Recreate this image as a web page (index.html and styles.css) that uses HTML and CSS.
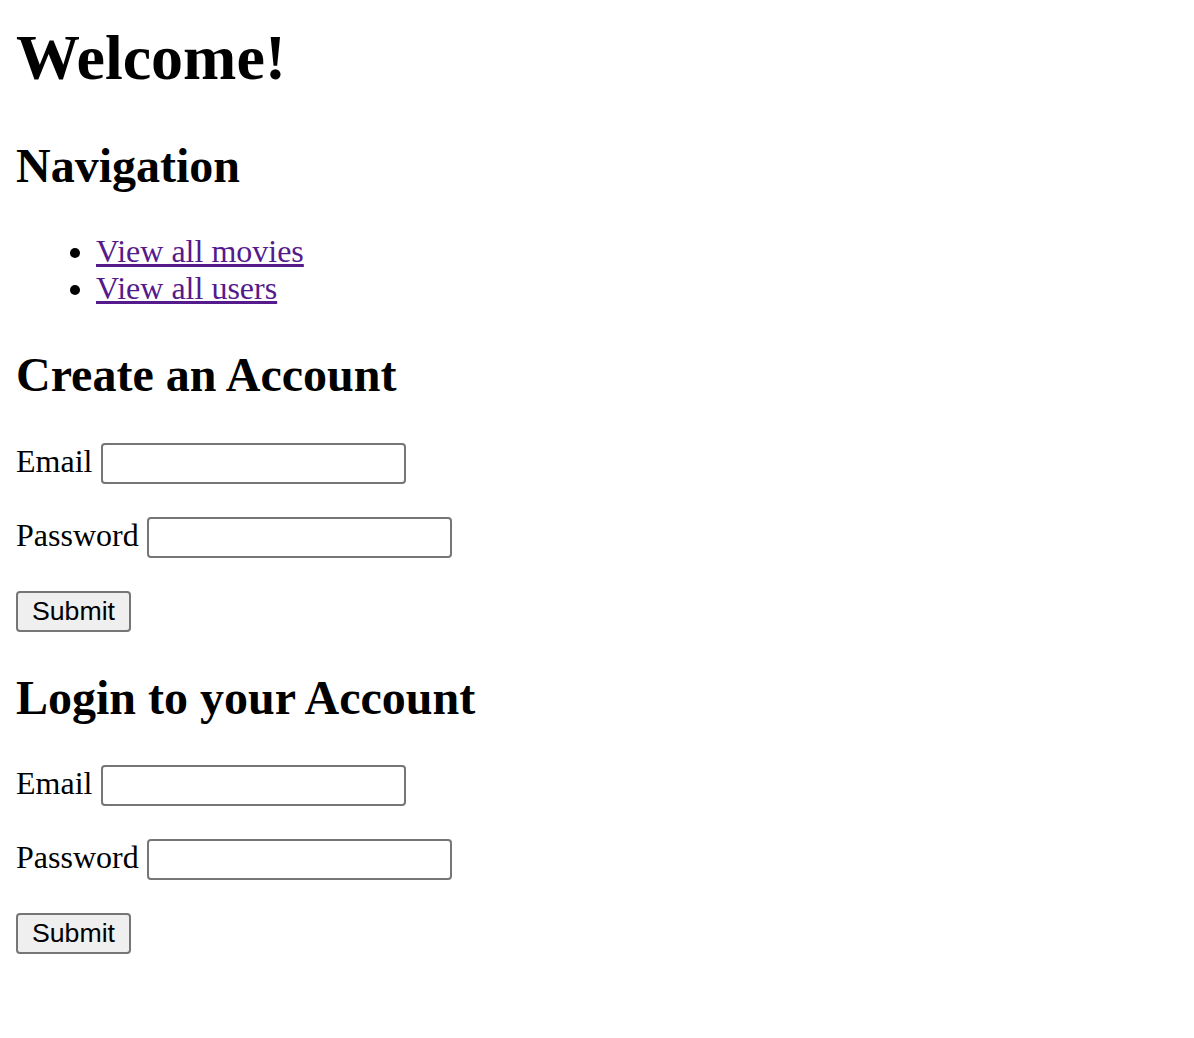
FILE: index.html
```html
<!DOCTYPE html>
<html lang="en">
<head>
<meta charset="utf-8">
<title>Welcome!</title>
<link rel="stylesheet" href="styles.css">
</head>
<body>
<main class="page">
  <h1 class="title">Welcome!</h1>

  <h2 class="section-title">Navigation</h2>
  <ul class="nav-list">
    <li><a class="nav-link" href="#movies">View all movies</a></li>
    <li><a class="nav-link" href="#users">View all users</a></li>
  </ul>

  <h2 class="section-title">Create an Account</h2>
  <form class="form">
    <div class="field">
      <label class="label" for="signup-email">Email</label>
      <input class="input" id="signup-email" type="email">
    </div>
    <div class="field">
      <label class="label" for="signup-password">Password</label>
      <input class="input" id="signup-password" type="password">
    </div>
    <div class="field">
      <button class="btn" type="submit">Submit</button>
    </div>
  </form>

  <h2 class="section-title section-title--tight">Login to your Account</h2>
  <form class="form">
    <div class="field">
      <label class="label" for="login-email">Email</label>
      <input class="input" id="login-email" type="email">
    </div>
    <div class="field">
      <label class="label" for="login-password">Password</label>
      <input class="input" id="login-password" type="password">
    </div>
    <div class="field">
      <button class="btn" type="submit">Submit</button>
    </div>
  </form>
</main>
</body>
</html>
```

FILE: styles.css
```css
html, body {
  background: #ffffff;
}

body {
  margin: 0 16px 16px;
  font-family: "Liberation Serif", "Times New Roman", serif;
  font-size: 32px;
  color: #000000;
}

.page {
  display: block;
}

.title {
  font-size: 64px;
  font-weight: bold;
  margin: 21px 0 42.88px;
  line-height: normal;
}

.section-title {
  font-size: 48px;
  font-weight: bold;
  margin: 39.84px 0;
  line-height: normal;
}

.section-title--tight {
  margin-top: 38.5px;
  margin-bottom: 38.5px;
}

.nav-list {
  margin: 32px 0;
  padding-left: 80px;
  list-style: disc;
}

.nav-link {
  color: #551a8b;
  text-decoration: underline;
}

.form {
  margin: 0;
}

.field {
  display: flex;
  align-items: flex-start;
  gap: 8.4px;
  height: 40.5px;
  padding-top: 1.5px;
  margin: 32px 0;
}

.label {
  line-height: normal;
}

.input {
  box-sizing: border-box;
  flex: none;
  width: 305px;
  height: 41px;
  margin: 0;
  padding: 2px 4px;
  border: 2px solid #767676;
  border-radius: 4px;
  background: #ffffff;
  font-family: "Liberation Sans", Arial, sans-serif;
  font-size: 26.67px;
}

.btn {
  box-sizing: border-box;
  flex: none;
  height: 41px;
  margin: 0;
  padding: 0 14px;
  border: 2px solid #767676;
  border-radius: 4px;
  background: #efefef;
  color: #000000;
  font-family: "Liberation Sans", Arial, Helvetica, sans-serif;
  font-size: 26.67px;
  line-height: 1;
}
```
